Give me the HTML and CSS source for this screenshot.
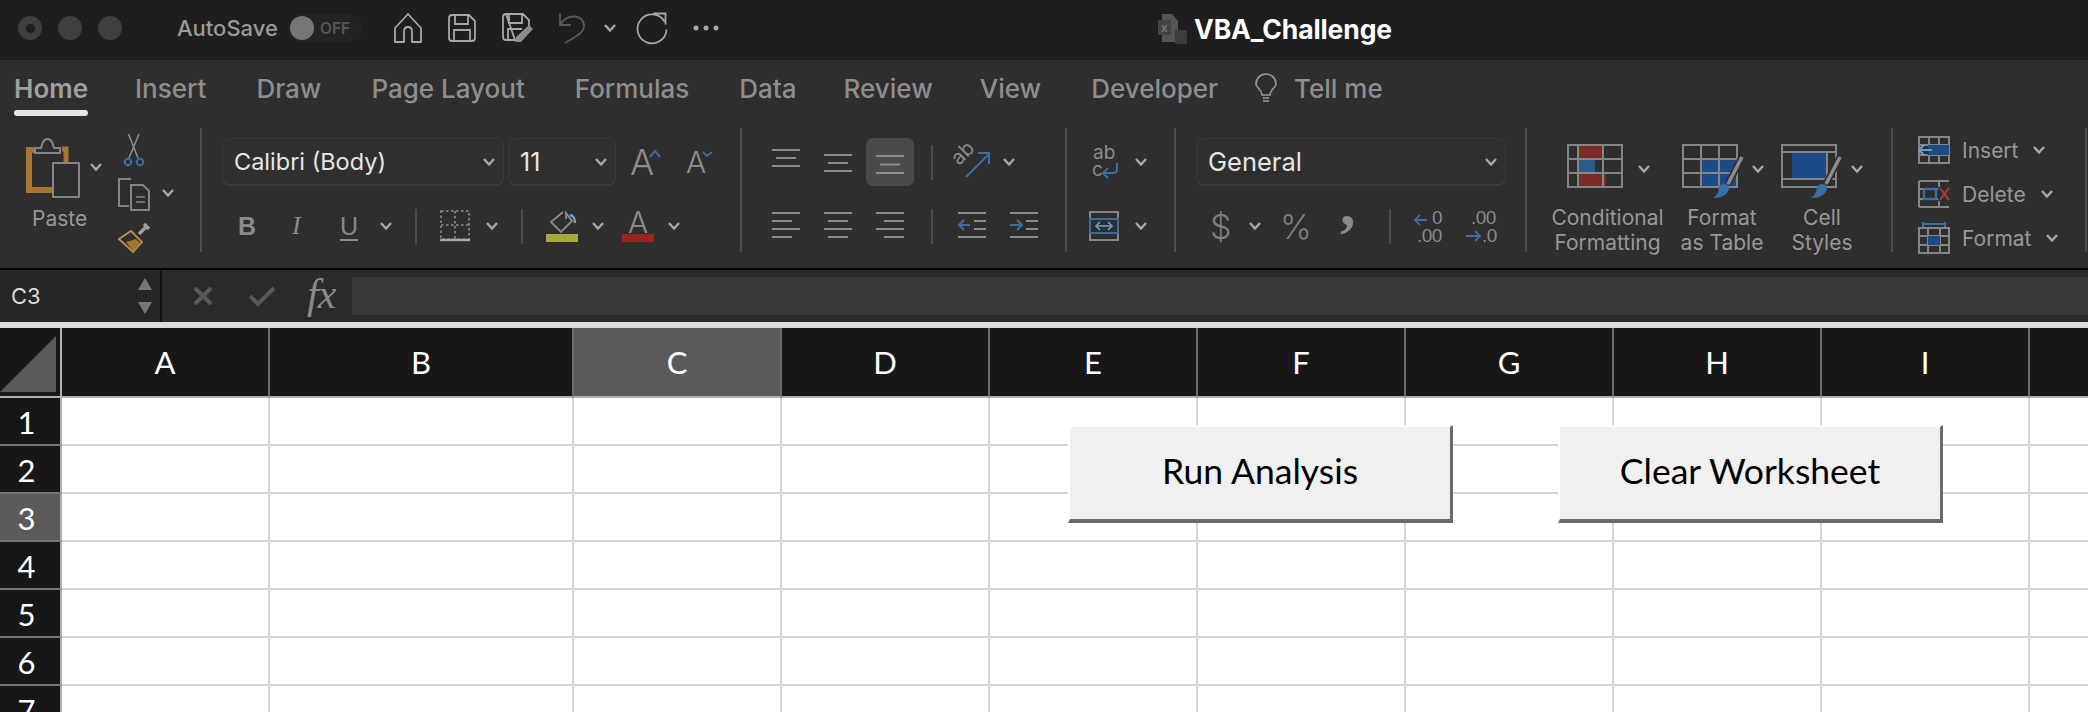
FILE: index.html
```html
<!DOCTYPE html>
<html lang="en">
<head>
<meta charset="utf-8">
<title>VBA_Challenge</title>
<link rel="stylesheet" href="styles.css">
</head>
<body>
<svg class="defs" width="0" height="0"><symbol id="chev" viewBox="0 0 12 8"><polyline points="1,1 6,6.5 11,1" fill="none" stroke="#a8a8a8" stroke-width="2.4"/></symbol></svg>
<div class="app">
  <header class="titlebar">
    <div class="lights"><span class="light light-close"></span><span class="light"></span><span class="light"></span></div>
    <span class="autosave">AutoSave</span>
    <div class="toggle"><span class="knob"></span><span class="off">OFF</span></div>
    <svg class="qa qa-home" width="28" height="30" viewBox="0 0 28 30"><path d="M14 1L1 15V29H10V19Q10 14 14 14Q18 14 18 19V29H27V15Z" fill="none" stroke="#a8a8a8" stroke-width="1.8" stroke-linejoin="round"/></svg>
    <svg class="qa qa-save" width="28" height="28" viewBox="0 0 28 28"><path d="M4 1H21L27 7V24Q27 27 24 27H4Q1 27 1 24V4Q1 1 4 1ZM7 1V10H20V1M6 27V16H22V27" fill="none" stroke="#a8a8a8" stroke-width="1.8"/></svg>
    <svg class="qa qa-saveas" width="32" height="30" viewBox="0 0 32 30"><path d="M4 1H21L27 7V13M13 27H4Q1 27 1 24V4Q1 1 4 1ZM7 1V10H20V1M6 27V16H20" fill="none" stroke="#a8a8a8" stroke-width="1.8"/><path d="M27 12L31 16L19 29L13 29L14 24Z" fill="#8c8c8c"/></svg>
    <svg class="qa qa-undo" width="28" height="32" viewBox="0 0 28 32"><path d="M2 1V13H13M2 13C9 1 26 2 26 14C26 22 14 26 7 31" fill="none" stroke="#585858" stroke-width="1.8"/></svg>
    <svg class="qa qa-menu" width="12" height="8"><use href="#chev"/></svg>
    <svg class="qa qa-redo" width="32" height="32" viewBox="0 0 32 32"><path d="M29 9A14.5 14.5 0 1 0 31 17M18 1H30V12" fill="none" stroke="#a8a8a8" stroke-width="1.8" transform="translate(-.5 .5)"/></svg>
    <svg class="qa qa-more" width="26" height="6" viewBox="0 0 26 6"><circle cx="3" cy="3" r="2.5" fill="#a8a8a8"/><circle cx="13" cy="3" r="2.5" fill="#a8a8a8"/><circle cx="23" cy="3" r="2.5" fill="#a8a8a8"/></svg>
    <div class="doc">
      <svg width="30" height="30" viewBox="0 0 30 30"><path d="M4 0H14L20 7V28H4Z" fill="#555"/><rect x="0" y="6" width="13" height="15" fill="#444"/><text x="3" y="18" class="doc-x">x</text><rect x="17" y="16" width="12" height="14" rx="1" fill="#3c3c3c"/></svg>
      <span class="doc-name">VBA_Challenge</span>
    </div>
  </header>

  <nav class="tabs">
    <div class="tab tab-active"><span>Home</span><i class="tab-bar"></i></div>
    <div class="tab"><span>Insert</span></div>
    <div class="tab"><span>Draw</span></div>
    <div class="tab"><span>Page Layout</span></div>
    <div class="tab"><span>Formulas</span></div>
    <div class="tab"><span>Data</span></div>
    <div class="tab tab-review"><span>Review</span></div>
    <div class="tab tab-view"><span>View</span></div>
    <div class="tab"><span>Developer</span></div>
    <div class="tab tab-tell">
      <svg width="24" height="30" viewBox="0 0 24 30"><path d="M8 21C8 15 2 14 2 10A10 10 0 0 1 22 10C22 14 16 15 16 21ZM9 24H15M9 27H15" fill="none" stroke="#9a9a9a" stroke-width="1.6"/></svg>
      <span>Tell me</span>
    </div>
  </nav>

  <section class="ribbon">
    <div class="group g-clip">
      <div class="paste">
        <svg width="76" height="60" viewBox="0 0 76 60"><path d="M9 12H3V52H27" fill="none" stroke="#a87432" stroke-width="6"/><path d="M36 11H40V24" fill="none" stroke="#a87432" stroke-width="5"/><path d="M9 15V10H15C16 6 17 1 21.5 1C26 1 27 6 28 10H34V15Z" fill="#2e2e2e" stroke="#858585" stroke-width="2"/><rect x="27" y="25" width="26" height="34" fill="#2e2e2e" stroke="#858585" stroke-width="2"/><polyline points="65,26 70,31.5 75,26" fill="none" stroke="#a8a8a8" stroke-width="2.4"/></svg>
        <span class="paste-label">Paste</span>
      </div>
      <div class="clip-tools">
        <svg width="32" height="34" viewBox="0 0 32 34"><path d="M10.5 0L20 24M21 0L11 24" fill="none" stroke="#8c8c8c" stroke-width="1.6"/><circle cx="10" cy="28" r="3.2" fill="none" stroke="#3a6ea5" stroke-width="2"/><circle cx="22" cy="28" r="3.2" fill="none" stroke="#3a6ea5" stroke-width="2"/></svg>
        <svg width="56" height="34" viewBox="0 0 56 34"><path d="M13 1H1V28H11" fill="none" stroke="#858585" stroke-width="2"/><path d="M13 7H25L31 13V32H13Z" fill="none" stroke="#858585" stroke-width="2"/><path d="M18 19H27M18 24H27" stroke="#858585" stroke-width="1.6"/><polyline points="45,12 50,17.5 55,12" fill="none" stroke="#a8a8a8" stroke-width="2.4"/></svg>
        <svg width="32" height="32" viewBox="0 0 32 32"><path d="M21 12L29 4M26 2L31 7" stroke="#a0a0a0" stroke-width="3.4" fill="none"/><path d="M1 17L13 9L24 20L15 30Z" fill="#2e2e2e" stroke="#b8944c" stroke-width="1.8"/><path d="M8 20L18 17L22 21L15 29Z" fill="#a87432"/></svg>
      </div>
    </div>

    <div class="group g-font">
      <div class="row">
        <div class="select sel-font"><span>Calibri (Body)</span><svg class="chev" width="12" height="8"><use href="#chev"/></svg></div>
        <div class="select sel-size"><span>11</span><svg class="chev" width="12" height="8"><use href="#chev"/></svg></div>
        <svg class="grow" width="32" height="28" viewBox="0 0 32 28"><text x="0" y="27" class="big-a">A</text><polyline points="20,9 25,3 30,9" fill="none" stroke="#3a6ea5" stroke-width="2"/></svg>
        <svg class="shrink" width="28" height="24" viewBox="0 0 28 24"><text x="0" y="23" class="mid-a">A</text><polyline points="17,2 21,6 26,2" fill="none" stroke="#3a6ea5" stroke-width="2"/></svg>
      </div>
      <div class="row-grid font-grid">
        <b class="fmt-b">B</b><i class="fmt-i">I</i><span class="fmt-u">U</span>
        <svg width="12" height="8"><use href="#chev"/></svg>
        <span class="vsep"></span>
        <svg width="30" height="32" viewBox="0 0 30 32"><rect x="1" y="1" width="28" height="28" fill="none" stroke="#8c8c8c" stroke-width="1.6" stroke-dasharray="2.5 2.5"/><path d="M15 1V29M1 15H29" stroke="#8c8c8c" stroke-width="1.6" stroke-dasharray="2.5 2.5"/><path d="M0 30H30" stroke="#a8a8a8" stroke-width="2.4"/></svg>
        <svg width="12" height="8"><use href="#chev"/></svg>
        <span class="vsep"></span>
        <svg width="32" height="32" viewBox="0 0 32 32"><path d="M17 2L5 12L15 22L26 11L20 3V9" fill="none" stroke="#8c8c8c" stroke-width="1.8"/><path d="M24 5Q29 6 29 13" fill="none" stroke="#6f9dcb" stroke-width="2.4"/><rect x="0" y="24" width="32" height="8" fill="#aba73a"/></svg>
        <svg width="12" height="8"><use href="#chev"/></svg>
        <svg width="32" height="32" viewBox="0 0 32 32"><text x="6" y="23" class="color-a">A</text><rect x="0" y="24" width="32" height="8" fill="#9c2418"/></svg>
        <svg width="12" height="8"><use href="#chev"/></svg>
      </div>
    </div>

    <div class="group g-align">
      <div class="row">
        <span class="cell-btn"><svg width="28" height="28" viewBox="0 0 28 28"><path d="M0 2H28M4 10H24M0 18H28" stroke="#8c8c8c" stroke-width="2"/></svg></span>
        <span class="cell-btn"><svg width="28" height="28" viewBox="0 0 28 28"><path d="M0 7H28M4 15H24M0 23H28" stroke="#8c8c8c" stroke-width="2"/></svg></span>
        <span class="cell-btn active"><svg width="28" height="28" viewBox="0 0 28 28"><path d="M0 8H28M4 16.500H24M0 25H28" stroke="#8c8c8c" stroke-width="2"/></svg></span>
        <span class="vsep align-sep"></span>
        <svg class="orient" width="34" height="32" viewBox="0 0 34 32"><text x="0" y="0" class="orient-t" transform="translate(3 20) rotate(-45)">ab</text><path d="M10 31L32 9M22 7H33V18" fill="none" stroke="#3a6ea5" stroke-width="2"/></svg>
        <svg class="orient-chev" width="12" height="8"><use href="#chev"/></svg>
      </div>
      <div class="row">
        <span class="cell-btn"><svg width="28" height="28" viewBox="0 0 28 28"><path d="M0 1H28M0 9H20M0 17H28M0 25H20" stroke="#8c8c8c" stroke-width="2"/></svg></span>
        <span class="cell-btn"><svg width="28" height="28" viewBox="0 0 28 28"><path d="M0 1H28M4 9H24M0 17H28M4 25H24" stroke="#8c8c8c" stroke-width="2"/></svg></span>
        <span class="cell-btn"><svg width="28" height="28" viewBox="0 0 28 28"><path d="M0 1H28M8 9H28M0 17H28M8 25H28" stroke="#8c8c8c" stroke-width="2"/></svg></span>
        <span class="vsep indent-sep"></span>
        <span class="cell-btn indent-btn"><svg width="28" height="28" viewBox="0 0 28 28"><path d="M0 1H28M16 9H28M16 17H28M0 25H28" stroke="#8c8c8c" stroke-width="2"/><path d="M12 13H2M6 8L1 13L6 18" fill="none" stroke="#3a6ea5" stroke-width="2.2"/></svg></span>
        <span class="cell-btn indent-btn"><svg width="28" height="28" viewBox="0 0 28 28"><path d="M0 1H28M16 9H28M16 17H28M0 25H28" stroke="#8c8c8c" stroke-width="2"/><path d="M0 13H11M7 8L12 13L7 18" fill="none" stroke="#3a6ea5" stroke-width="2.2"/></svg></span>
      </div>
    </div>

    <div class="group g-wrap">
      <div class="row wrap-row">
        <svg width="32" height="32" viewBox="0 0 32 32"><text x="4" y="13" class="wrap-t">ab</text><text x="3" y="30" class="wrap-t">c</text><path d="M28 17V23Q28 27 24 27H14M19 22L14 27L19 32" fill="none" stroke="#3a6ea5" stroke-width="2"/></svg>
        <svg width="12" height="8"><use href="#chev"/></svg>
      </div>
      <div class="row wrap-row">
        <svg width="32" height="30" viewBox="0 0 32 30"><rect x="1" y="1" width="28" height="28" fill="none" stroke="#858585" stroke-width="2"/><path d="M1 8H29M1 22H29" stroke="#858585" stroke-width="2"/><rect x="1" y="8" width="28" height="14" fill="none" stroke="#3a6ea5" stroke-width="2"/><path d="M7 15H23M11 11L7 15L11 19M19 11L23 15L19 19" fill="none" stroke="#6f9dcb" stroke-width="1.6"/></svg>
        <svg width="12" height="8"><use href="#chev"/></svg>
      </div>
    </div>

    <div class="group g-num">
      <div class="row"><div class="select sel-num"><span>General</span><svg class="chev" width="12" height="8"><use href="#chev"/></svg></div></div>
      <div class="row-grid num-grid">
        <span class="num-sym sym-dollar">$</span>
        <svg width="12" height="8"><use href="#chev"/></svg>
        <span class="num-sym sym-pct">%</span>
        <svg width="20" height="30" viewBox="0 0 20 30"><text x="0" y="14" class="sym-comma">,</text></svg>
        <span class="vsep"></span>
        <svg width="32" height="34" viewBox="0 0 32 34"><text x="18" y="15" class="dec-t">0</text><text x="3" y="33" class="dec-t">.00</text><path d="M13 11H2M6 6L1 11L6 16" fill="none" stroke="#3a6ea5" stroke-width="1.8"/></svg>
        <svg width="32" height="34" viewBox="0 0 32 34"><text x="5" y="15" class="dec-t">.00</text><text x="16" y="33" class="dec-t">.0</text><path d="M0 27H13M9 22L14 27L9 32" fill="none" stroke="#3a6ea5" stroke-width="1.8"/></svg>
      </div>
    </div>

    <div class="group g-styles">
      <div class="style-col">
        <svg width="82" height="56" viewBox="0 0 82 56"><rect x="11" y="1" width="25" height="14" fill="#7e2a26"/><rect x="11" y="15" width="17" height="14" fill="#2a5a8e"/><rect x="11" y="29" width="28" height="14" fill="#7e2a26"/><path d="M1 1H55V43H1ZM11 1V43M36 1V43M1 15H55M1 29H55" fill="none" stroke="#858585" stroke-width="2"/><polyline points="72,22 77,27.5 82,22" fill="none" stroke="#a8a8a8" stroke-width="2.400"/></svg>
        <span class="style-label">Conditional<br>Formatting</span>
      </div>
      <div class="style-col">
        <svg class="fmt-icon" width="82" height="56" viewBox="0 0 82 56"><rect x="19" y="16" width="37" height="28" fill="#1d4b86"/><path d="M1 1H55V43H1ZM19 1V43M37 1V43M1 15H55M1 29H55" fill="none" stroke="#858585" stroke-width="2"/><path d="M60 13L46 40" stroke="#2e2e2e" stroke-width="7"/><path d="M60 13L46 40" stroke="#8c8c8c" stroke-width="3.500"/><path d="M37 42Q42 38 47 42C48 49 40 55 31 54Q37 50 37 42Z" fill="#3a6ea5"/><polyline points="71,22 76,27.5 81,22" fill="none" stroke="#a8a8a8" stroke-width="2.400"/></svg>
        <span class="style-label">Format<br>as Table</span>
      </div>
      <div class="style-col">
        <svg width="82" height="56" viewBox="0 0 82 56"><rect x="11" y="8" width="35" height="27" fill="#1d4b86"/><path d="M1 1H55V43H1ZM11 8H46V35H11M1 8H55M1 35H55" fill="none" stroke="#858585" stroke-width="2"/><path d="M59 13L45 40" stroke="#2e2e2e" stroke-width="7"/><path d="M59 13L45 40" stroke="#8c8c8c" stroke-width="3.500"/><path d="M36 42Q41 38 46 42C47 49 39 55 30 54Q36 50 36 42Z" fill="#3a6ea5"/><polyline points="71,22 76,27.5 81,22" fill="none" stroke="#a8a8a8" stroke-width="2.400"/></svg>
        <span class="style-label">Cell<br>Styles</span>
      </div>
    </div>

    <div class="group g-cells">
      <div class="cell-row">
        <svg width="32" height="28" viewBox="0 0 32 28"><path d="M1 1H31V27H1ZM1 9H31M1 19H31M11 1V27M21 1V27" fill="none" stroke="#858585" stroke-width="2"/><rect x="10" y="9" width="21" height="10" fill="#1d4b86"/><path d="M14 14H2M6 9L1 14L6 19" fill="none" stroke="#6f9dcb" stroke-width="2"/></svg>
        <span>Insert</span><svg class="cell-chev" width="12" height="8"><use href="#chev"/></svg>
      </div>
      <div class="cell-row">
        <svg width="32" height="28" viewBox="0 0 32 28"><path d="M1 1H31M1 27H31M1 1V27M21 1V7M21 21V27M1 9H20M1 19H20" fill="none" stroke="#858585" stroke-width="2"/><rect x="6" y="9" width="12" height="10" fill="none" stroke="#3a6ea5" stroke-width="2.400"/><path d="M22 8L31 20M31 8L22 20" stroke="#b53a30" stroke-width="2"/></svg>
        <span>Delete</span><svg class="cell-chev" width="12" height="8"><use href="#chev"/></svg>
      </div>
      <div class="cell-row">
        <svg width="32" height="32" viewBox="0 0 32 32"><path d="M1 6H31V31H1ZM1 14H31M1 23H31M10 6V31M22 6V31" fill="none" stroke="#858585" stroke-width="2"/><rect x="10" y="14" width="12" height="9" fill="#1d4b86"/><path d="M5 2H27M5 0V5M27 0V5" fill="none" stroke="#3a6ea5" stroke-width="2"/></svg>
        <span>Format</span><svg class="cell-chev" width="12" height="8"><use href="#chev"/></svg>
      </div>
    </div>
  </section>

  <section class="formula">
    <div class="namebox">
      <span>C3</span>
      <div class="spin"><i class="spin-up"></i><i class="spin-down"></i></div>
    </div>
    <svg class="f-x" width="20" height="20" viewBox="0 0 20 20"><path d="M2 2L18 18M18 2L2 18" stroke="#5a5a5a" stroke-width="4"/></svg>
    <svg class="f-ok" width="28" height="22" viewBox="0 0 28 22"><path d="M2 11L10 19L26 3" fill="none" stroke="#5a5a5a" stroke-width="4"/></svg>
    <span class="fx">fx</span>
    <div class="f-input"></div>
  </section>
  <div class="divider"></div>

  <main class="sheet">
    <div class="grid">
      <div class="corner"><svg width="56" height="56" viewBox="0 0 56 56"><path d="M0 56L56 0V56Z" fill="#5a5a5a"/></svg></div>
      <div class="ch">A</div><div class="ch">B</div><div class="ch ch-on">C</div><div class="ch">D</div><div class="ch">E</div><div class="ch">F</div><div class="ch">G</div><div class="ch">H</div><div class="ch">I</div><div class="ch"></div>
      <div class="rh">1</div><div class="c"></div><div class="c"></div><div class="c"></div><div class="c"></div><div class="c"></div><div class="c"></div><div class="c"></div><div class="c"></div><div class="c"></div><div class="c"></div>
      <div class="rh">2</div><div class="c"></div><div class="c"></div><div class="c"></div><div class="c"></div><div class="c"></div><div class="c"></div><div class="c"></div><div class="c"></div><div class="c"></div><div class="c"></div>
      <div class="rh rh-on">3</div><div class="c"></div><div class="c"></div><div class="c"></div><div class="c"></div><div class="c"></div><div class="c"></div><div class="c"></div><div class="c"></div><div class="c"></div><div class="c"></div>
      <div class="rh">4</div><div class="c"></div><div class="c"></div><div class="c"></div><div class="c"></div><div class="c"></div><div class="c"></div><div class="c"></div><div class="c"></div><div class="c"></div><div class="c"></div>
      <div class="rh">5</div><div class="c"></div><div class="c"></div><div class="c"></div><div class="c"></div><div class="c"></div><div class="c"></div><div class="c"></div><div class="c"></div><div class="c"></div><div class="c"></div>
      <div class="rh">6</div><div class="c"></div><div class="c"></div><div class="c"></div><div class="c"></div><div class="c"></div><div class="c"></div><div class="c"></div><div class="c"></div><div class="c"></div><div class="c"></div>
      <div class="rh">7</div><div class="c"></div><div class="c"></div><div class="c"></div><div class="c"></div><div class="c"></div><div class="c"></div><div class="c"></div><div class="c"></div><div class="c"></div><div class="c"></div>
    </div>
    <button class="macro macro-run">Run Analysis</button>
    <button class="macro macro-clear">Clear Worksheet</button>
  </main>
</div>
</body>
</html>
```

FILE: styles.css
```css
* { box-sizing: border-box; }
html, body { margin: 0; padding: 0; background: #2e2e2e; }
.defs { position: absolute; }
svg { display: block; flex: none; overflow: visible; }
.app { width: 2088px; height: 712px; overflow: hidden; font-family: Inter, "Liberation Sans", sans-serif; }

/* title bar */
.titlebar { height: 60px; background: #1e1e1e; display: flex; align-items: center; padding-left: 18px; }
.lights { display: flex; gap: 16px; margin-top: -4px; }
.light { width: 24px; height: 24px; border-radius: 50%; background: #3e3e3e; display: flex; align-items: center; justify-content: center; }
.light-close::after { content: ""; width: 9px; height: 9px; border-radius: 50%; background: #1c1c1c; }
.autosave { margin: -4px 0 0 55px; font-size: 22px; font-weight: 500; color: #9a9a9a; width: 99px; white-space: nowrap; }
.toggle { margin: -4px 0 0 12px; width: 75px; height: 28px; border-radius: 14px; background: #232323; display: flex; align-items: center; padding-left: 2px; gap: 6px; }
.knob { width: 24px; height: 24px; border-radius: 50%; background: #767676; }
.off { font-size: 15.5px; font-weight: 600; color: #585858; }
.qa { margin-top: -4px; }
.qa-home { margin-left: 31px; }
.qa-save { margin-left: 26px; }
.qa-saveas { margin-left: 26px; }
.qa-undo { margin-left: 24px; }
.qa-menu { margin-left: 18px; }
.qa-redo { margin-left: 20px; }
.qa-more { margin-left: 25px; }
.doc { display: flex; align-items: center; gap: 6px; margin: -3px 0 0 439px; }
.doc-x { font-size: 12px; fill: #888; font-family: Inter, sans-serif; }
.doc-name { font-size: 26.5px; font-weight: 700; color: #fff; white-space: nowrap; letter-spacing: -.1px; }

/* tabs */
.tabs { height: 58px; background: #2e2e2e; display: flex; gap: 50px; padding: 14px 0 0 14px; }
.tab { font-size: 26px; font-weight: 500; line-height: 30px; color: #8e8e8e; white-space: nowrap; }
.tab-active { color: #a0a0a0; font-weight: 600; margin-right: -3px; }
.tab-bar { display: block; height: 6px; margin-top: 6px; border-radius: 3px; background: #e6e6e6; }
.tab-review { margin-left: -3px; }
.tab-view { margin-left: -3px; }
.tab-tell { display: flex; gap: 16px; margin-left: -14px; }

/* ribbon */
.ribbon { height: 152px; background: #2e2e2e; border-bottom: 2px solid #000; display: flex; padding-top: 10px; }
.group { height: 124px; border-right: 2px solid #4c4c4c; display: flex; flex-direction: column; gap: 16px; padding-top: 10px; color: #9a9a9a; }
.row { display: flex; align-items: center; height: 48px; }
.row-grid { display: grid; align-items: center; height: 48px; }
.vsep { display: block; width: 2px; height: 35px; background: #4c4c4c; }
.select { height: 48px; border-radius: 8px; border: 1px solid #3a3a3a; border-bottom-width: 2px; background: #2f2f2f; display: flex; align-items: center; justify-content: space-between; padding: 0 8px 0 11px; font-size: 23.5px; color: #e6e6e6; white-space: nowrap; }

.g-clip { width: 202px; flex-direction: row; gap: 16px; padding: 10px 0 0 26px; }
.paste { width: 76px; }
.paste-label { display: block; margin: 6px 0 0 6px; font-size: 21px; line-height: 30px; color: #989898; }
.clip-tools { display: flex; flex-direction: column; gap: 10px; margin-top: -4px; }

.g-font { width: 540px; padding-left: 20px; }
.sel-font { width: 282px; }
.sel-size { width: 108px; margin-left: 4px; font-size: 25px; }
.grow { margin-left: 14px; }
.shrink { margin-left: 24px; }
.big-a { font: 300 36px Inter, sans-serif; fill: #8e8e8e; }
.mid-a { font: 300 30px Inter, sans-serif; fill: #8e8e8e; }
.color-a { font: 300 30px Inter, sans-serif; fill: #8e8e8e; }
.font-grid { padding-left: 16px; grid-template-columns: 54px 48px 40px 35px 25px 46px 35px 25px 46px 30px 46px 12px; }
.fmt-b { font: 700 25px "Liberation Sans", sans-serif; color: #8a8a8a; }
.fmt-i { font: italic 400 26px "Liberation Serif", serif; color: #8a8a8a; }
.fmt-u { font: 400 25px "Liberation Sans", sans-serif; color: #8a8a8a; text-decoration: underline; text-underline-offset: 4px; }

.g-align { width: 325px; padding-left: 20px; }
.g-align .row { gap: 4px; }
.cell-btn { width: 48px; height: 48px; border-radius: 7px; display: flex; align-items: center; justify-content: center; }
.cell-btn.active { background: #4b4b4b; }
.align-sep { margin: 0 19px 0 13px; }
.orient-chev { margin-left: 9px; }
.orient-t { font: 400 20px Inter, sans-serif; fill: #8c8c8c; }
.indent-sep { margin: 0 11px 0 13px; }

.g-wrap { width: 109px; padding-left: 22px; }
.wrap-row { gap: 14px; }
.wrap-t { font: 400 19px Inter, sans-serif; fill: #8c8c8c; }

.g-num { width: 351px; padding-left: 20px; }
.sel-num { width: 310px; font-size: 25.5px; }
.num-grid { padding-left: 14px; grid-template-columns: 39px 31px 60px 49px 25px 52px 32px; }
.num-sym { font-weight: 300; color: #808080; }
.sym-dollar { font-size: 34px; }
.sym-pct { font-size: 34px; }
.sym-comma { font: 700 62px "Liberation Serif", serif; fill: #8a8a8a; }
.dec-t { font: 400 19px "Liberation Sans", sans-serif; fill: #8a8a8a; letter-spacing: -.5px; }

.g-styles { width: 366px; display: grid; grid-template-columns: 113px 116px 84px; padding: 16px 0 0 24px; gap: 0; align-content: start; }
.style-col { display: flex; flex-direction: column; align-items: center; }
.fmt-icon { margin-left: 2px; }
.style-label { margin-top: 6px; font-size: 21px; line-height: 24.5px; text-align: center; color: #989898; white-space: nowrap; }

.g-cells { width: 194px; gap: 0; padding: 0 0 0 25px; }
.cell-row { flex: none; height: 44px; display: flex; align-items: center; gap: 12px; font-size: 21px; color: #989898; }
.cell-chev { margin-left: 3px; }

/* formula bar */
.formula { height: 52px; background: #2a2a2a; display: flex; align-items: center; }
.namebox { width: 162px; height: 100%; background: #262626; border-right: 2px solid #111; display: flex; align-items: center; justify-content: space-between; padding: 0 8px 0 11px; font-size: 22px; color: #dcdcdc; }
.spin { display: flex; flex-direction: column; gap: 12px; }
.spin i { display: block; width: 0; height: 0; border-left: 7px solid transparent; border-right: 7px solid transparent; }
.spin-up { border-bottom: 12px solid #777; }
.spin-down { border-top: 12px solid #777; }
.f-x { margin-left: 31px; }
.f-ok { margin-left: 35px; }
.fx { margin-left: 31px; width: 45px; padding-bottom: 5px; font: italic 400 42px "Liberation Serif", serif; line-height: 48px; color: #8a8a8a; letter-spacing: -1px; }
.f-input { flex: 1; height: 38px; background: #383838; border-radius: 2px 0 0 2px; }
.divider { height: 6px; background: #dcdcdc; }

/* sheet */
.sheet { position: relative; height: 384px; overflow: hidden; background: #fff; }
.grid { display: grid; grid-template-columns: 62px 208px 304px repeat(7, 208px) 208px; grid-template-rows: 70px repeat(7, 48px); font-family: Lato, sans-serif; }
.corner { background: #171717; border-right: 2px solid #b0b0b0; border-bottom: 2px solid #b0b0b0; padding: 8px 0 0 0; }
.ch { background: #171717; border-right: 2px solid #6b6b6b; border-bottom: 2px solid #b0b0b0; color: #fff; font-size: 31px; display: flex; align-items: center; justify-content: center; }
.ch-on { background: #5a5a5a; }
.rh { background: #171717; border-right: 2px solid #b0b0b0; border-bottom: 2px solid #777; color: #fff; font-size: 31px; display: flex; align-items: center; justify-content: center; padding: 2px 7px 0 0; }
.rh-on { background: #5a5a5a; }
.c { border-right: 2px solid #d4d4d4; border-bottom: 2px solid #d4d4d4; }

.macro { position: absolute; top: 97px; width: 385px; height: 98px; padding: 0 0 5px; background: #f0f0f0; border-style: solid; border-width: 2px 3px 4px 2px; border-color: #fff #6a6a6a #6a6a6a #fff; border-radius: 0; font: 400 35.5px Lato, sans-serif; color: #000; }
.macro-run { left: 1068px; }
.macro-clear { left: 1558px; }
```
